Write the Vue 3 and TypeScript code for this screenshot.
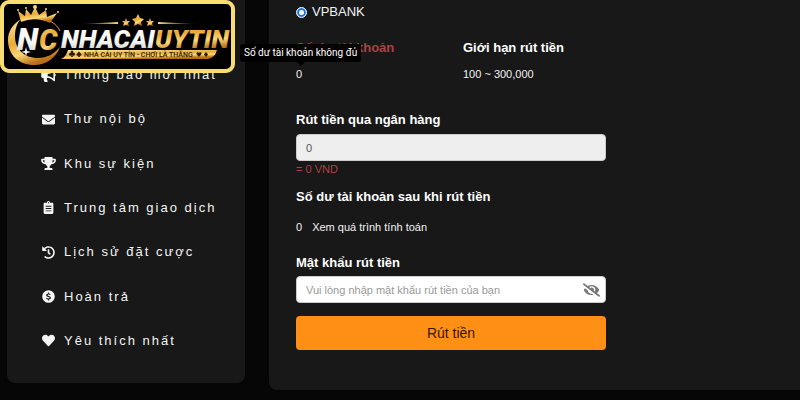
<script setup lang="ts">
import { ref } from 'vue'

interface MenuItem {
  label: string
  viewBox: string
  path: string
}

const menu: MenuItem[] = [
  {
    label: 'Thông báo mới nhất',
    viewBox: '0 0 576 512',
    path: 'M576 240c0-23.63-12.95-44.04-32-55.12V32.01C544 23.26 537.02 0 512 0c-7.12 0-14.19 2.38-19.98 7.02l-85.03 68.03C364.28 109.19 310.66 128 256 128H64c-35.35 0-64 28.65-64 64v96c0 35.35 28.65 64 64 64h33.7c-1.39 10.48-2.18 21.14-2.18 32 0 39.77 9.26 77.35 25.56 110.94 5.19 10.69 16.52 17.06 28.4 17.06h74.28c26.05 0 41.69-29.84 25.9-50.56-16.4-21.52-26.15-48.36-26.15-77.44 0-11.11 1.62-21.79 4.41-32H256c54.66 0 108.28 18.81 150.98 52.95l85.03 68.03a32.023 32.023 0 0 0 19.98 7.02c24.92 0 32-22.78 32-32V295.13C563.05 284.04 576 263.63 576 240zm-96 141.42l-33.05-26.44C392.95 311.78 325.12 288 256 288v-96c69.12 0 136.95-23.78 190.95-66.98L480 98.58v282.84z',
  },
  {
    label: 'Thư nội bộ',
    viewBox: '0 0 512 512',
    path: 'M502.3 190.8c3.9-3.1 9.7-.2 9.7 4.7V400c0 26.5-21.5 48-48 48H48c-26.5 0-48-21.5-48-48V195.6c0-5 5.7-7.8 9.7-4.7 22.4 17.4 52.1 39.5 154.1 113.6 21.1 15.4 56.7 47.8 92.2 47.6 35.7.3 72-32.8 92.3-47.6 102-74.1 131.6-96.3 154-113.7zM256 320c23.2.4 56.6-29.2 73.4-41.4 132.7-96.3 142.8-104.7 173.4-128.7 5.8-4.5 9.2-11.5 9.2-18.9v-19c0-26.5-21.5-48-48-48H48c-26.5 0-48 21.5-48 48v19c0 7.4 3.4 14.3 9.2 18.9 30.6 23.9 40.7 32.4 173.4 128.7 16.8 12.2 50.2 41.8 73.4 41.4z',
  },
  {
    label: 'Khu sự kiện',
    viewBox: '0 0 576 512',
    path: 'M552 64H448V24c0-13.3-10.7-24-24-24H152c-13.3 0-24 10.7-24 24v40H24C10.7 64 0 74.7 0 88v56c0 35.7 22.5 72.4 61.9 100.7 31.5 22.7 69.8 37.1 110 41.7C203.3 338.5 240 360 240 360v72h-48c-35.3 0-64 20.7-64 56v12c0 6.6 5.4 12 12 12h296c6.6 0 12-5.4 12-12v-12c0-35.3-28.7-56-64-56h-48v-72s36.7-21.5 68.1-73.6c40.3-4.6 78.6-19 110-41.7 39.3-28.3 61.9-65 61.9-100.7V88c0-13.3-10.7-24-24-24zM99.3 192.8C74.9 175.2 64 155.6 64 144v-16h64.2c1 32.6 5.8 61.2 12.8 86.2-15.1-5.2-29.2-12.4-41.7-21.4zM512 144c0 16.1-17.7 36.1-35.3 48.8-12.5 9-26.7 16.2-41.8 21.4 7-25 11.8-53.6 12.8-86.2H512v16z',
  },
  {
    label: 'Trung tâm giao dịch',
    viewBox: '0 0 384 512',
    path: 'M336 64h-80c0-35.3-28.7-64-64-64s-64 28.7-64 64H48C21.5 64 0 85.5 0 112v352c0 26.5 21.5 48 48 48h288c26.5 0 48-21.5 48-48V112c0-26.5-21.5-48-48-48zM80 190h224v34H80zM80 280h224v34H80zM80 370h224v34H80zM192 40a24 24 0 1 1 0 48a24 24 0 1 1 0-48z',
  },
  {
    label: 'Lịch sử đặt cược',
    viewBox: '0 0 512 512',
    path: 'M504 255.531c.253 136.64-111.18 248.372-247.82 248.468-59.015.042-113.223-20.53-155.822-54.911-11.077-8.94-11.905-25.541-1.839-35.607l11.267-11.267c8.609-8.609 22.353-9.551 31.891-1.984C173.062 425.135 212.781 440 256 440c101.705 0 184-82.311 184-184 0-101.705-82.311-184-184-184-48.814 0-93.149 18.969-126.068 49.932l50.754 50.754c10.08 10.08 2.941 27.314-11.313 27.314H24c-8.837 0-16-7.163-16-16V38.627c0-14.254 17.234-21.393 27.314-11.314l49.372 49.372C129.209 34.136 189.552 8 256 8c136.81 0 247.747 110.78 248 247.531zm-180.912 78.784l9.823-12.63c8.138-10.463 6.253-25.542-4.21-33.679L288 256.349V152c0-13.255-10.745-24-24-24h-16c-13.255 0-24 10.745-24 24v135.651l65.409 50.874c10.463 8.137 25.541 6.253 33.679-4.21z',
  },
  {
    label: 'Hoàn trả',
    viewBox: '0 0 512 512',
    path: 'M256 8a248 248 0 1 0 0 496a248 248 0 1 0 0-496zM238 96h36v42c26 2 48 11 66 26l-26 34c-20-14-38-20-58-20-24 0-38 9-38 23 0 17 18 23 50 32 42 12 82 29 82 74 0 40-30 65-76 70v41h-36v-41c-30-3-58-15-80-35l28-34c22 19 44 28 70 28s42-9 42-26c0-18-20-25-52-34-40-11-80-28-80-72 0-36 28-61 72-66z',
  },
  {
    label: 'Yêu thích nhất',
    viewBox: '0 0 512 512',
    path: 'M462.3 62.6C407.5 15.9 326 24.3 275.7 76.2L256 96.5l-19.7-20.3C186.1 24.3 104.5 15.9 49.7 62.6c-62.8 53.6-66.1 149.8-9.9 207.9l193.5 199.8c12.5 12.9 32.8 12.9 45.3 0l193.5-199.8c56.3-58.1 53-154.3-9.8-207.9z',
  },
]

const bank = ref('VPBANK')
const amount = ref('0')
const password = ref('')
const showPassword = ref(false)
</script>

<template>
  <div class="page">
    <a class="logo" href="#" aria-label="NHACAIUYTIN">
      <svg viewBox="0 0 227 65">
        <defs>
          <linearGradient id="gold" x1="0" y1="0" x2="0.4" y2="1">
            <stop offset="0" stop-color="#fff0a0" />
            <stop offset="0.5" stop-color="#e9a935" />
            <stop offset="0.75" stop-color="#fbd775" />
            <stop offset="1" stop-color="#b96f13" />
          </linearGradient>
          <linearGradient id="silver" x1="0" y1="0" x2="0" y2="1">
            <stop offset="0" stop-color="#ffffff" />
            <stop offset="0.6" stop-color="#f4f4f2" />
            <stop offset="1" stop-color="#bcbcb8" />
          </linearGradient>
          <linearGradient id="streak" x1="0" y1="0" x2="1" y2="0">
            <stop offset="0" stop-color="#e6c25a" stop-opacity="0" />
            <stop offset="1" stop-color="#f7dc7c" />
          </linearGradient>
        </defs>
        <path fill="url(#gold)" d="M17 15C9 20 4 27 4 36C4 51 15 61 30 61C42 61 52 54 56 43C50 50 43 54 34 54C20 54 11 45 11 32C11 25 13 19 17 15z" />
        <path fill="none" stroke="#d79b35" stroke-width="1" d="M42 15C49 18 54 22 56 27" />
        <path fill="url(#gold)" d="M17 18L14 7L21 12L22 5L27 11L31 3L35 11L42 6L43 13L53 9L46 19Q31 12 17 18z" />
        <g fill="#fbd66b">
          <circle cx="14" cy="6" r="1" /><circle cx="22" cy="4" r="1" />
          <circle cx="31" cy="3" r="2" /><circle cx="42" cy="5" r="1" />
          <circle cx="54" cy="8" r="1" />
        </g>
        <text class="mono" x="13" y="46" fill="url(#silver)">N</text>
        <text class="mono mono-c" x="35" y="46" fill="url(#gold)">C</text>
        <path fill="#fff" d="M22 43l1 4 4 1-4 1-1 3-1-3-4-1 4-1z" />
        <text class="word" x="57" y="44"><tspan fill="url(#silver)">NHACAI</tspan><tspan fill="url(#gold)">UYTIN</tspan></text>
        <path fill="url(#streak)" d="M76 20L114 18V20z" />
        <path fill="url(#streak)" d="M142 20L182 18V20z" transform="translate(336 0) scale(-1 1)" />
        <g fill="url(#gold)">
          <path d="M134 10l2 4 4 1-3 3 1 4-4-2-4 2 1-4-3-3 4-1z" />
          <path d="M122 14l1 3 3 0-2 2 1 3-3-1-3 1 1-3-2-2 3 0z" />
          <path d="M146 14l1 3 3 0-2 2 1 3-3-1-3 1 1-3-2-2 3 0z" />
        </g>
        <path fill="url(#gold)" d="M64 46H213Q211 54 204 55H57Q62 53 64 46z" />
        <text class="slogan" x="80" y="53">NHÀ CÁI UY TÍN - CHƠI LÀ THẮNG</text>
        <g fill="#2b1a02">
          <path d="M67 53l.6-2a1.4 1.4 0 1 1-.6-2a1.4 1.4 0 1 1 2 0a1.4 1.4 0 1 1-.6 2l.6 2z" />
          <path d="M75 47.500c1 1.500 2.500 2 2.500 3.300a1.200 1.200 0 0 1-2 .7l.5 1.500h-2l.5-1.500a1.200 1.200 0 0 1-2-.7c0-1.300 1.500-1.800 2.500-3.300z" />
          <path d="M195 53c-1-1.500-2.500-2-2.500-3.400a1.300 1.300 0 0 1 2.500-.6a1.300 1.300 0 0 1 2.500.6c0 1.400-1.500 1.900-2.500 3.400z" />
          <path d="M202 48l2 2.500-2 2.500-2-2.500z" />
        </g>
      </svg>
    </a>

    <nav class="sidebar">
      <ul class="menu">
        <li v-for="item in menu" :key="item.label">
          <a class="menu-link" href="#">
            <svg class="menu-icon" :viewBox="item.viewBox" aria-hidden="true">
              <path fill="currentColor" fill-rule="evenodd" :d="item.path" />
            </svg>
            <span>{{ item.label }}</span>
          </a>
        </li>
      </ul>
    </nav>

    <main class="panel">
      <form class="form" @submit.prevent>
        <label class="bank">
          <input v-model="bank" type="radio" name="bank" value="VPBANK" />
          <span>VPBANK</span>
        </label>

        <div class="summary">
          <div class="balance">
            <h3 class="title danger">Số dư tài khoản</h3>
            <p class="value">0</p>
            <div class="tooltip" role="tooltip">Số dư tài khoản không đủ</div>
          </div>
          <div>
            <h3 class="title">Giới hạn rút tiền</h3>
            <p class="value">100 ~ 300,000</p>
          </div>
        </div>

        <label class="title" for="amount">Rút tiền qua ngân hàng</label>
        <input id="amount" v-model="amount" class="field amount" type="text" readonly />
        <p class="converted">= 0 VND</p>

        <h3 class="title">Số dư tài khoản sau khi rút tiền</h3>
        <p class="after">
          <span>0</span>
          <a href="#">Xem quá trình tính toán</a>
        </p>

        <label class="title" for="password">Mật khẩu rút tiền</label>
        <div class="password">
          <input
            id="password"
            v-model="password"
            class="field"
            :type="showPassword ? 'text' : 'password'"
            placeholder="Vui lòng nhập mật khẩu rút tiền của bạn"
          />
          <button class="eye" type="button" aria-label="Hiện mật khẩu" @click="showPassword = !showPassword">
            <svg viewBox="0 0 640 512" aria-hidden="true">
              <path fill="currentColor" d="M320 400c-75.85 0-137.25-58.71-142.9-133.11L72.2 185.82c-13.79 17.3-26.48 35.59-36.72 55.59a32.35 32.35 0 0 0 0 29.19C89.71 376.41 197.07 448 320 448c26.91 0 52.87-4 77.89-10.46L346 397.39a144.13 144.13 0 0 1-26 2.61zm313.82 58.1l-110.55-85.44a331.25 331.25 0 0 0 81.25-102.07 32.35 32.35 0 0 0 0-29.19C550.29 135.59 442.93 64 320 64a308.15 308.15 0 0 0-147.32 37.7L45.46 3.37A16 16 0 0 0 23 6.18L3.37 31.45A16 16 0 0 0 6.18 53.9l588.36 454.73a16 16 0 0 0 22.46-2.81l19.64-25.27a16 16 0 0 0-2.82-22.45zm-183.72-142l-39.3-30.38A94.75 94.75 0 0 0 416 256a94.76 94.76 0 0 0-121.31-92.21A47.65 47.65 0 0 1 304 192a46.64 46.64 0 0 1-1.54 10l-73.61-56.89A142.31 142.31 0 0 1 320 112a143.92 143.92 0 0 1 144 144c0 21.63-5.29 41.79-13.9 60.11z" />
            </svg>
          </button>
        </div>

        <button class="submit" type="submit">Rút tiền</button>
      </form>
    </main>
  </div>
</template>

<style>
body {
  margin: 0;
  background: #060606;
}
</style>

<style scoped>
* {
  box-sizing: border-box;
}

.page {
  position: relative;
  display: grid;
  grid-template-columns: 238px 1fr;
  gap: 24px;
  align-items: start;
  min-height: 100vh;
  padding-left: 7px;
  padding-bottom: 10px;
  background: #060606;
  color: #f2f2f2;
  font: 11px/16px "Liberation Sans", Arial, sans-serif;
}

.logo {
  position: absolute;
  z-index: 2;
  top: 0;
  left: 0;
  width: 235px;
  height: 73px;
  border: 4px solid #f8de72;
  border-radius: 9px;
  background: #000;
}

.logo svg {
  display: block;
  width: 100%;
  height: 100%;
}

.mono {
  font: italic 900 31px Roboto, sans-serif;
}

.mono-c {
  font-size: 29px;
}

.word {
  font: italic 900 26px Roboto, sans-serif;
}

.slogan {
  font: 500 7px Roboto, sans-serif;
  fill: #2b1a02;
}

.sidebar {
  padding: 53px 0 20px 34px;
  border-radius: 0 0 8px 8px;
  background: #181818;
}

.menu {
  display: grid;
  grid-auto-rows: 1fr;
  height: 310px;
  margin: 0;
  padding: 0;
  list-style: none;
}

.menu-link {
  display: flex;
  align-items: center;
  gap: 8px;
  height: 100%;
  color: #f4f4f4;
  font-size: 13px;
  letter-spacing: 2px;
  text-decoration: none;
  white-space: nowrap;
}

.menu-icon {
  flex: none;
  width: 15px;
  height: 13px;
}

.panel {
  padding: 4px 28px 40px 27px;
  border-radius: 0 0 0 8px;
  background: #181818;
}

.form {
  display: flex;
  flex-direction: column;
  max-width: 310px;
}

.bank {
  display: flex;
  align-items: center;
  gap: 5px;
  margin-bottom: 20px;
  font-size: 13px;
}

.bank input {
  appearance: none;
  width: 11px;
  height: 11px;
  margin: 0;
  border: 1px solid #e4eefb;
  border-radius: 50%;
  background: #fff;
  box-shadow: inset 0 0 0 2px #1673e6;
}

.summary {
  display: grid;
  grid-template-columns: 1fr 1fr;
  gap: 24px;
  margin-bottom: 30px;
}

.balance {
  position: relative;
}

.title {
  margin: 0;
  color: #fff;
  font-size: 13px;
  font-weight: 700;
  white-space: nowrap;
}

.danger {
  color: #a94442;
}

.value {
  margin: 10px 0 0;
}

.tooltip {
  position: absolute;
  top: 4px;
  left: -56px;
  padding: 1px 4px;
  border-radius: 3px;
  background: rgba(0, 0, 0, 0.9);
  color: #fff;
  font-family: Roboto, sans-serif;
  font-size: 10px;
  white-space: nowrap;
}

.tooltip::after {
  position: absolute;
  top: 100%;
  left: 50%;
  margin-left: -4px;
  border: 4px solid transparent;
  border-top-color: #000;
  border-bottom: 0;
  content: "";
}

.field {
  width: 100%;
  height: 27px;
  padding: 0 9px;
  border: 1px solid #ccc;
  border-radius: 4px;
  background: #fff;
  color: #555;
  font: 11px "Liberation Sans", Arial, sans-serif;
}

.field::placeholder {
  color: #999;
}

.amount {
  margin-top: 6px;
  background: #eee;
}

.converted {
  margin: 0 0 12px;
  color: #a94442;
}

.after {
  display: flex;
  gap: 10px;
  margin: 14px 0 20px;
}

.after a {
  color: inherit;
  text-decoration: none;
}

.password {
  position: relative;
  margin: 5px 0 13px;
}

.eye {
  position: absolute;
  top: 0;
  right: 6px;
  display: flex;
  align-items: center;
  height: 27px;
  padding: 0;
  border: 0;
  background: none;
  color: #777;
}

.eye svg {
  width: 17px;
  height: 14px;
}

.submit {
  height: 34px;
  border: 0;
  border-radius: 4px;
  background: #ff9015;
  color: #361500;
  font: 14px "Liberation Sans", Arial, sans-serif;
}
</style>
